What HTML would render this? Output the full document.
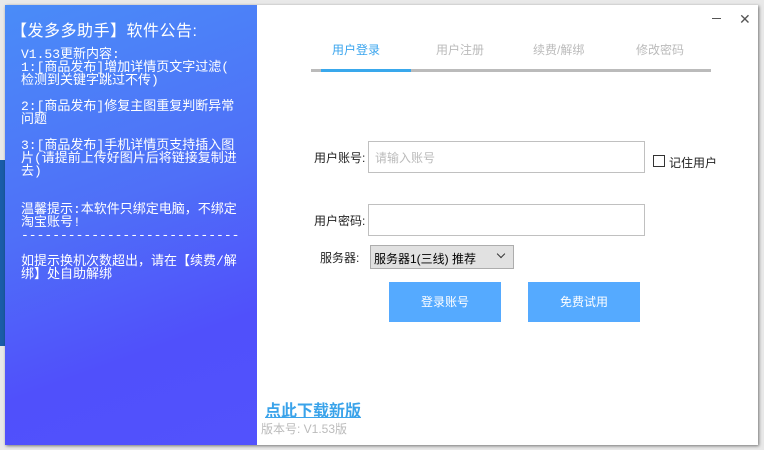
<!DOCTYPE html>
<html><head><meta charset="utf-8"><style>
*{margin:0;padding:0;box-sizing:border-box}
body{width:764px;height:450px;background:#e9e9e9;position:relative;overflow:hidden;font-family:"Liberation Sans","Noto Sans CJK SC",sans-serif}
.strip{position:absolute;left:0;top:160px;width:6px;height:186px;background:#1a5da8}
.win{position:absolute;left:5px;top:5px;width:753px;height:440px;background:#fff;box-shadow:1px 1px 3px rgba(0,0,0,.5)}
.left{position:absolute;left:0;top:0;width:252px;height:440px;background:linear-gradient(160deg,#4a8cf8 0%,#4f6ff8 45%,#5050fb 75%,#5252fd 100%);color:#fff}
.title{position:absolute;left:6px;top:12px;font-size:16px;letter-spacing:0.5px;white-space:nowrap}
pre{position:absolute;left:16px;top:44px;font-family:"Liberation Mono","Noto Sans CJK SC",monospace;font-size:13px;line-height:12.95px;color:#fff}
.abs{position:absolute;white-space:nowrap}
.tab{font-size:12px;color:#bbb;top:36px}
.inp{position:absolute;border:1px solid #c0c0c0;background:#fff}
.lbl{font-size:12px;color:#222}
.btn{position:absolute;background:#55aaff;color:#fff;font-size:12px;text-align:center;line-height:40px;width:112px;height:40px;top:277px}
</style></head><body>
<div class="strip"></div>
<div class="win">
 <div class="left">
  <div class="title">【发多多助手】软件公告:</div>
<pre>V1.53更新内容:
1:[商品发布]增加详情页文字过滤(
检测到关键字跳过不传)

2:[商品发布]修复主图重复判断异常
问题

3:[商品发布]手机详情页支持插入图
片(请提前上传好图片后将链接复制进
去)


温馨提示:本软件只绑定电脑，不绑定
淘宝账号!
----------------------------

如提示换机次数超出，请在【续费/解
绑】处自助解绑</pre>
 </div>
 <div class="abs" style="left:707px;top:13px;width:9px;height:1px;background:#555"></div>
 <div class="abs" style="left:734px;top:6px;font-size:14px;color:#555">✕</div>
 <div class="abs tab" style="left:327px;color:#39a4ee">用户登录</div>
 <div class="abs tab" style="left:431px">用户注册</div>
 <div class="abs tab" style="left:528px">续费/解绑</div>
 <div class="abs tab" style="left:631px">修改密码</div>
 <div class="abs" style="left:306px;top:64px;width:400px;height:3px;background:#bbb"></div>
 <div class="abs" style="left:316px;top:64px;width:90px;height:3px;background:#39a8ec"></div>
 <div class="abs lbl" style="left:309px;top:144px">用户账号:</div>
 <div class="inp" style="left:363px;top:136px;width:277px;height:32px"></div>
 <div class="abs" style="left:370px;top:144px;font-size:12px;color:#bbb">请输入账号</div>
 <div class="abs" style="left:648px;top:150px;width:12px;height:12px;border:1px solid #333"></div>
 <div class="abs lbl" style="left:664px;top:149px">记住用户</div>
 <div class="abs lbl" style="left:309px;top:207px">用户密码:</div>
 <div class="inp" style="left:363px;top:199px;width:277px;height:32px"></div>
 <div class="abs lbl" style="left:315px;top:244px">服务器:</div>
 <div class="abs" style="left:365px;top:240px;width:144px;height:24px;background:#e1e1e1;border:1px solid #adadad"></div>
 <div class="abs lbl" style="left:369px;top:245px;color:#000">服务器1(三线) 推荐</div>
 <div class="abs" style="left:493px;top:246px;width:6px;height:6px;border-right:1px solid #333;border-bottom:1px solid #333;transform:rotate(45deg)"></div>
 <div class="btn" style="left:384px">登录账号</div>
 <div class="btn" style="left:523px">免费试用</div>
 <div class="abs" style="left:260px;top:392px;font-size:16px;font-weight:bold;color:#3aa3ea;text-decoration:underline">点此下载新版</div>
 <div class="abs" style="left:256px;top:415px;font-size:12px;color:#bbb">版本号: V1.53版</div>
</div>
</body></html>
